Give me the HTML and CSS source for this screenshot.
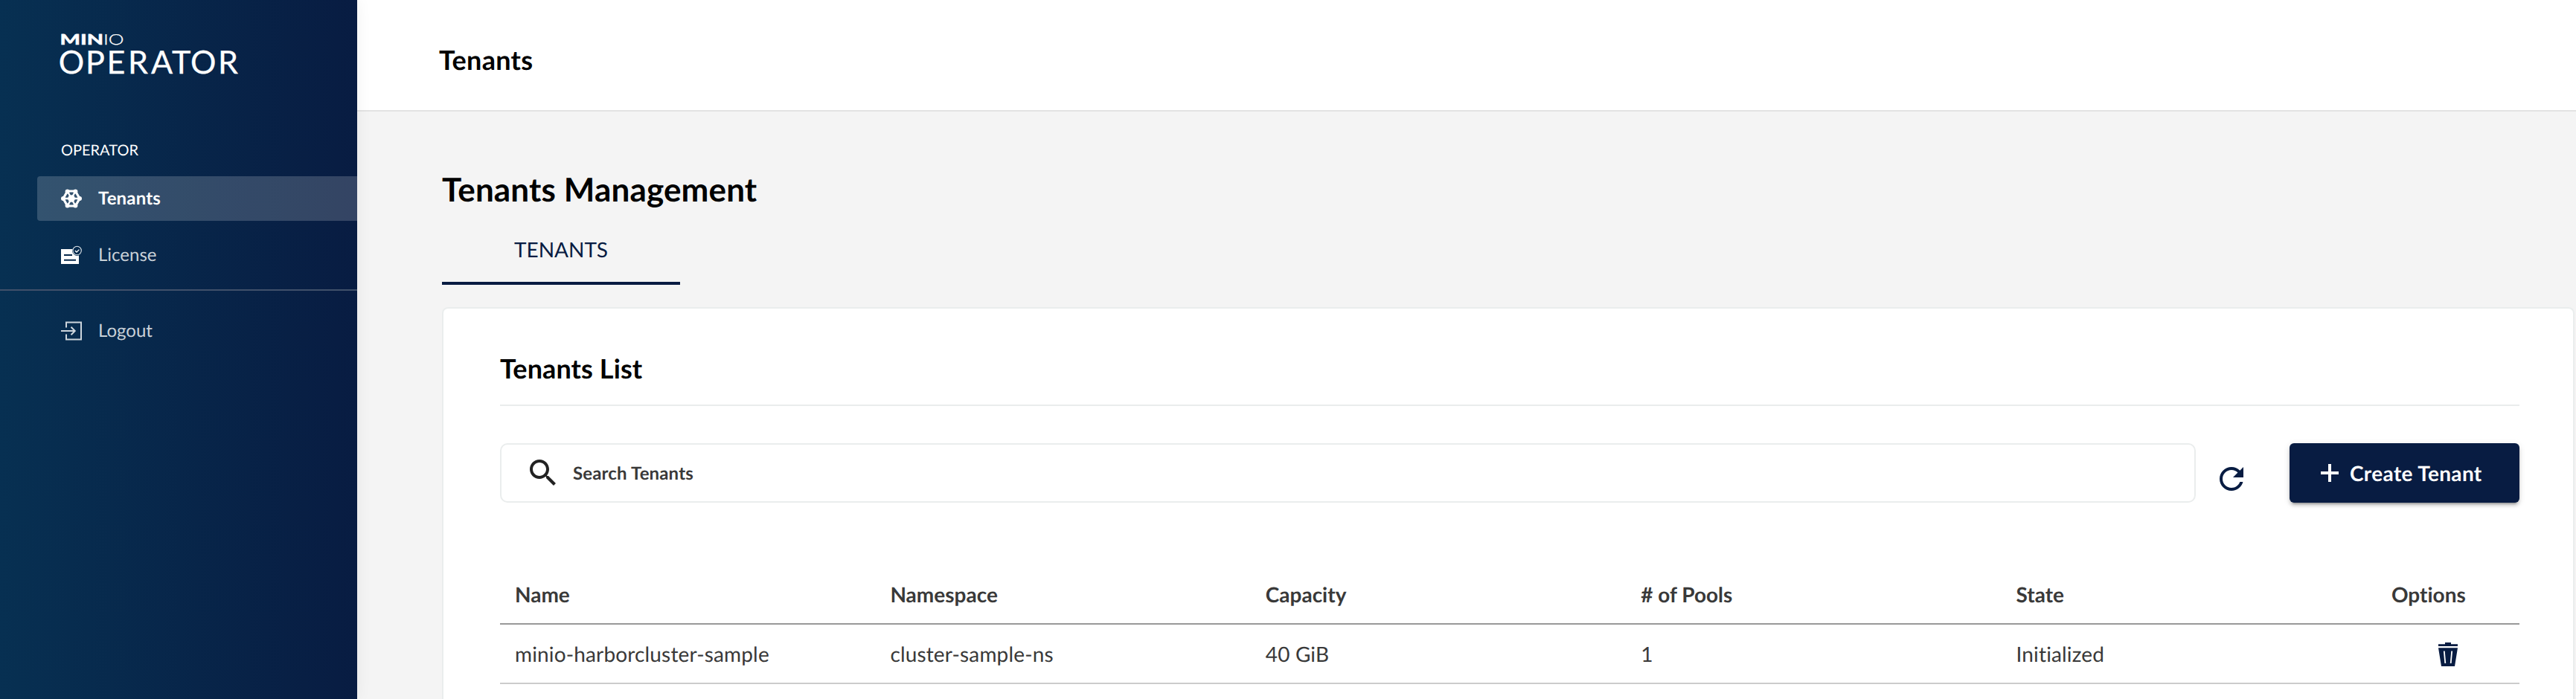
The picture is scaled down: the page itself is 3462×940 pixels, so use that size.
FILE: index.html
```html
<!DOCTYPE html>
<html lang="en">
<head>
<meta charset="utf-8">
<title>MinIO Operator</title>
<link rel="stylesheet" href="styles.css">
</head>
<body>
<div class="app">
  <aside class="sidebar">
    <svg class="logo" width="244" height="60" viewBox="0 0 244 60" fill="#fff">
      <text class="logo-min" x="-0.500" y="17.800" textLength="58.500" lengthAdjust="spacingAndGlyphs">MIN</text>
      <text class="logo-io" x="58" y="17.800" textLength="27.500" lengthAdjust="spacingAndGlyphs">IO</text>
      <text class="logo-product" x="-2.300 34 62.500 91 122 150 175 212" y="56.500">OPERATOR</text>
    </svg>
    <div class="section-label">OPERATOR</div>
    <nav class="nav">
      <a class="nav-item active">
        <svg class="nav-icon" viewBox="0 0 28 28" fill="#fff" stroke="#fff">
          <path d="M3 14 8.600 4H19.400L25 14 19.400 24H8.600Z" fill="none" stroke-width="3.2"/>
          <path d="M3 14H25M8.600 4 19.400 24M19.400 4 8.600 24" fill="none" stroke-width="2.4"/>
          <g stroke="none"><circle cx="14" cy="14" r="4.8"/><circle cx="3" cy="14" r="3"/><circle cx="25" cy="14" r="3"/><circle cx="8.600" cy="4.400" r="3"/><circle cx="19.400" cy="4.400" r="3"/><circle cx="8.600" cy="23.600" r="3"/><circle cx="19.400" cy="23.600" r="3"/></g>
        </svg>
        <span>Tenants</span>
      </a>
      <a class="nav-item">
        <svg class="nav-icon" viewBox="0 0 28 28">
          <path d="M0 6H15.500A6.600 6.600 0 0 0 24 14.400V26H0Z" fill="#fff"/>
          <path d="M4 14H15M4 20.700H20" stroke="#07294c" stroke-width="2"/>
          <circle cx="21.600" cy="8" r="5.700" fill="none" stroke="#dfe5ea" stroke-width="1.1"/>
          <path d="M18.800 8 21 10 24.400 6.600" fill="none" stroke="#fff" stroke-width="1.3"/>
        </svg>
        <span>License</span>
      </a>
    </nav>
    <div class="nav-divider"></div>
    <nav class="nav">
      <a class="nav-item">
        <svg class="nav-icon" viewBox="0 0 28 28" fill="none" stroke="#cdd5dc" stroke-width="2">
          <path d="M7 9.500V2.500H27V25.500H7V18.500M0 14H18.500M13.500 8.800 18.700 14 13.500 19.200"/>
        </svg>
        <span>Logout</span>
      </a>
    </nav>
  </aside>
  <div class="page">
    <header class="topbar">Tenants</header>
    <main class="content">
      <h1 class="page-title">Tenants Management</h1>
      <div class="tabs"><div class="tab">TENANTS</div></div>
      <section class="card">
        <h2 class="card-title">Tenants List</h2>
        <div class="toolbar">
          <div class="search">
            <svg width="48" height="48" viewBox="0 0 24 24" fill="#222"><path d="M15.500 14h-.79l-.28-.27C15.410 12.590 16 11.110 16 9.500 16 5.910 13.090 3 9.500 3S3 5.910 3 9.500 5.910 16 9.500 16c1.610 0 3.090-.59 4.230-1.570l.27.28v.79l5 4.990L20.490 19l-4.990-5zm-6 0C7.010 14 5 11.990 5 9.500S7.010 5 9.500 5 14 7.010 14 9.500 11.990 14 9.500 14z"/></svg>
            <span>Search Tenants</span>
          </div>
          <svg class="refresh" width="48" height="48" viewBox="0 0 24 24" fill="#081c42"><path d="M17.650 6.350C16.200 4.900 14.210 4 12 4c-4.420 0-7.990 3.580-7.990 8s3.570 8 7.990 8c3.730 0 6.840-2.550 7.730-6h-2.080c-.82 2.330-3.040 4-5.650 4-3.310 0-6-2.690-6-6s2.690-6 6-6c1.660 0 3.140.69 4.220 1.780L13 11h7V4l-2.350 2.350z"/></svg>
          <div class="create">
            <svg width="24" height="24" viewBox="0 0 24 24"><path d="M0 12H24M12 0V24" stroke="#fff" stroke-width="4"/></svg>
            <span>Create Tenant</span>
          </div>
        </div>
        <div class="table">
          <div class="row head"><div>Name</div><div>Namespace</div><div>Capacity</div><div># of Pools</div><div>State</div><div>Options</div></div>
          <div class="row"><div>minio-harborcluster-sample</div><div>cluster-sample-ns</div><div>40 GiB</div><div>1</div><div>Initialized</div>
            <div class="options">
              <svg width="26" height="32" viewBox="0 0 26 32"><path d="M0 2.300H9V0H17V2.300H26V5H0ZM0 7.300H26L22 32H4Z" fill="#081c42"/><path d="M7.800 11.500 9.300 28M18.200 11.500 16.700 28" stroke="#fff" stroke-width="1.800"/></svg>
            </div>
          </div>
        </div>
      </section>
    </main>
  </div>
</div>
</body>
</html>
```
FILE: styles.css
```css
* { box-sizing: border-box; }
body {
  margin: 0; font-family: Lato, "Liberation Sans", sans-serif; color: #000;
  font-variant-ligatures: none; text-rendering: geometricPrecision;
}
.app { display: flex; height: 940px; overflow: hidden; background: #f4f4f4; }

.sidebar {
  flex: 0 0 480px;
  padding-top: 42px;
  background: linear-gradient(to right, #073052 0%, #081c42 100%);
  box-shadow: 0 0 20px rgba(0, 0, 0, 0.06);
  position: relative;
  z-index: 1;
}
.logo { display: block; margin-left: 81px; overflow: visible; }
.logo-min { font-size: 19.5px; font-weight: 900; stroke: #fff; stroke-width: 0.4px; }
.logo-io { font-size: 19.5px; font-weight: 300; stroke: #fff; stroke-width: 0.3px; }
.logo-product { font-size: 43px; stroke: #fff; stroke-width: 0.3px; }
.section-label { margin: 88px 0 23px 82px; font-size: 20px; line-height: 24px; color: #fff; }
.nav { display: flex; flex-direction: column; gap: 16px; padding-left: 50px; }
.nav-item {
  display: flex; align-items: center; gap: 22px; height: 60px;
  padding-left: 32px; font-size: 24px; line-height: 30px;
  color: #c9d1d8; border-radius: 4px 0 0 4px;
}
.nav-item.active { background: rgba(255, 255, 255, 0.18); color: #fff; font-weight: 700; letter-spacing: 0.15px; }
.nav-icon { width: 28px; height: 28px; overflow: visible; }
.nav-divider { height: 2px; margin: 16px 0 24px; background: #40506a; }

.page { flex: 1; min-width: 0; display: flex; flex-direction: column; }
.topbar {
  flex: 0 0 150px; padding: 58px 0 0 110px; background: #fff;
  border-bottom: 2px solid #e3e3e3; font-size: 36px; line-height: 44px; font-weight: 700;
  letter-spacing: 0.3px;
}
.content { flex: 1; display: flex; flex-direction: column; padding: 78px 2px 0 114px; }
.page-title { margin: 0; font-size: 44px; line-height: 54px; font-weight: 700; letter-spacing: 0.15px; }
.tabs { display: flex; }
.tab {
  width: 320px; padding: 36px 0 27px; border-bottom: 4px solid #081c42;
  font-size: 28px; line-height: 34px; text-align: center; color: #081c42;
}
.card {
  flex: 1; margin-top: 30px; padding: 58px 72px 0 76px; background: #fff;
  border: 2px solid #eaeded; border-bottom: 0; border-radius: 8px 8px 0 0;
}
.card-title {
  margin: 0 0 50px; padding-bottom: 27px; border-bottom: 2px solid #eaeded;
  font-size: 36px; line-height: 44px; font-weight: 700; letter-spacing: 0.1px;
}
.toolbar { display: flex; height: 80px; }
.search {
  display: flex; align-items: center; gap: 16px; width: 2279px; padding-left: 32px;
  border: 2px solid #eaeded; border-radius: 10px;
  font-size: 24px; font-weight: 700; color: #393939; letter-spacing: 0.15px;
}
.refresh { margin: 24px 54px 0 24px; }
.create {
  display: flex; align-items: center; gap: 15px; flex: 1; padding-left: 42px;
  border-radius: 6px; background: #081c42; color: #fff; font-size: 28px; font-weight: 700;
  letter-spacing: 0.35px;
  box-shadow: 0 6px 2px -4px rgba(0, 0, 0, 0.2), 0 4px 4px rgba(0, 0, 0, 0.14), 0 2px 10px rgba(0, 0, 0, 0.12);
}
.table { margin-top: 86px; }
.row {
  display: grid; grid-template-columns: repeat(5, 504.4px) 1fr;
  padding: 22px 0; border-bottom: 2px solid #ccc;
  font-size: 28px; line-height: 34px; color: #393939; letter-spacing: 0.15px;
}
.row > div { padding-left: 20px; }
.row.head { padding-top: 20px; border-bottom-color: #999; font-weight: 700; letter-spacing: 0; }
.row > .options { padding-left: 83px; padding-top: 2px; }
.options svg { display: block; }
```
